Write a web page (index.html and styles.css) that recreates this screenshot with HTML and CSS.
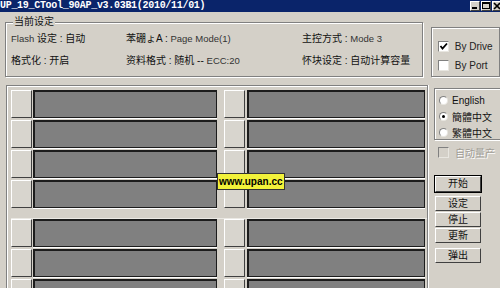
FILE: index.html
```html
<!DOCTYPE html>
<html lang="zh-CN">
<head>
    <meta charset="UTF-8">
    <title>UP_19_CTool_90AP_v3.03B1</title>
    <link rel="stylesheet" href="styles.css">
</head>
<body>
    <div class="titlebar">
        <span class="title">UP_19_CTool_90AP_v3.03B1(2010/11/01)</span>
        <div class="title-btns">
            <div class="tbtn"><svg width="8" height="8" viewBox="0 0 8 8"><rect x="1" y="5" width="5" height="2" fill="#000"/></svg></div>
            <div class="tbtn"><svg width="8" height="8" viewBox="0 0 8 8"><rect x="0.5" y="0.5" width="7" height="6" fill="none" stroke="#000"/><rect x="0" y="0" width="8" height="2" fill="#000"/></svg></div>
            <div class="tbtn"><svg width="8" height="8" viewBox="0 0 8 8"><path d="M1 1 L7 7 M7 1 L1 7" stroke="#000" stroke-width="1.6"/></svg></div>
        </div>
    </div>

    <div class="top">
        <div class="group settings">
            <div class="legend">当前设定</div>
            <div class="settings-grid">
                <span><i>Flash</i> 设定 : 自动</span>
                <span>苯硼ょA : <i>Page Mode(1)</i></span>
                <span>主控方式 : <i>Mode 3</i></span>
                <span>格式化 : 开启</span>
                <span>资料格式 : 随机 -- <i>ECC:20</i></span>
                <span>怀块设定 : 自动计算容量</span>
            </div>
        </div>
        <div class="group mode">
            <div class="check"><span class="box"><svg width="9" height="9" viewBox="0 0 9 9"><path d="M1.5 4 L3.5 6.5 L8 1.5" fill="none" stroke="#000" stroke-width="1.8"/></svg></span>By Drive</div>
            <div class="check"><span class="box"></span>By Port</div>
        </div>
    </div>

    <div class="bottom">
        <div class="slots">
            <div class="slot-group">
                <div class="slot-row"><div class="slot-btn"></div><div class="slot-bar"></div><div class="slot-btn"></div><div class="slot-bar narrow"></div></div>
                <div class="slot-row"><div class="slot-btn"></div><div class="slot-bar"></div><div class="slot-btn"></div><div class="slot-bar narrow"></div></div>
                <div class="slot-row"><div class="slot-btn"></div><div class="slot-bar"></div><div class="slot-btn"></div><div class="slot-bar narrow"></div></div>
                <div class="slot-row"><div class="slot-btn"></div><div class="slot-bar"></div><div class="slot-btn"></div><div class="slot-bar narrow"></div></div>
            </div>
            <div class="slot-group second">
                <div class="slot-row"><div class="slot-btn"></div><div class="slot-bar"></div><div class="slot-btn"></div><div class="slot-bar narrow"></div></div>
                <div class="slot-row"><div class="slot-btn"></div><div class="slot-bar"></div><div class="slot-btn"></div><div class="slot-bar narrow"></div></div>
                <div class="slot-row"><div class="slot-btn"></div><div class="slot-bar"></div><div class="slot-btn"></div><div class="slot-bar narrow"></div></div>
            </div>
            <div class="tooltip">www.upan.cc</div>
        </div>

        <div class="side">
            <div class="group lang">
                <div class="radio"><span class="dot"></span>English</div>
                <div class="radio"><span class="dot on"></span>簡體中文</div>
                <div class="radio"><span class="dot"></span>繁體中文</div>
            </div>
            <div class="check disabled"><span class="box"></span>自动量产</div>
            <div class="buttons">
                <div class="btn default">开始</div>
                <div class="btn">设定</div>
                <div class="btn">停止</div>
                <div class="btn">更新</div>
                <div class="btn eject">弹出</div>
            </div>
        </div>
    </div>
</body>
</html>
```

FILE: styles.css
```css
body {
    width: 500px;
    height: 288px;
    margin: 0;
    overflow: hidden;
    background: #d4d0c8;
    font-family: "Liberation Sans", "Noto Sans CJK SC", sans-serif;
    font-size: 10px;
    color: #111;
}

/* title bar */
.titlebar {
    height: 12px;
    background: #0a246a;
    display: flex;
    justify-content: space-between;
    align-items: center;
}

.title {
    font-family: "Liberation Mono", monospace;
    font-weight: 700;
    font-size: 10px;
    letter-spacing: -0.3px;
    color: #fff;
    line-height: 12px;
}

.title-btns {
    display: flex;
    gap: 1px;
    margin-right: -2px;
}

.tbtn {
    width: 10px;
    height: 10px;
    background: #d4d0c8;
    border-top: 1px solid #fff;
    border-left: 1px solid #fff;
    border-right: 1px solid #404040;
    border-bottom: 1px solid #404040;
    box-sizing: border-box;
    display: flex;
    align-items: center;
    justify-content: center;
}

/* group boxes */
.group {
    position: relative;
    box-sizing: border-box;
    border: 1px solid #808080;
    box-shadow: inset 1px 1px 0 #fff, 1px 1px 0 #fff;
}

.legend {
    position: absolute;
    top: -7px;
    left: 7px;
    padding: 0 1px;
    background: #d4d0c8;
    font-size: 10px;
    line-height: 12px;
}

.top {
    display: flex;
    align-items: flex-end;
    padding-top: 10px;
}

.settings {
    margin-left: 5px;
    width: 423px;
    height: 55px;
}

.settings-grid {
    display: grid;
    grid-template-columns: 115px 176px auto;
    row-gap: 10px;
    padding: 10px 0 0 5px;
    line-height: 12px;
}

.settings-grid i {
    font-style: normal;
    font-size: 9.5px;
    color: #333;
}

.mode {
    margin-left: 8px;
    width: 70px;
    height: 50px;
    padding: 12px 0 0 6px;
}

.check {
    display: flex;
    align-items: center;
    gap: 6px;
    height: 12px;
    margin-bottom: 7px;
    font-size: 10px;
    color: #222;
}

.box {
    width: 9px;
    height: 9px;
    background: #fff;
    border-top: 1px solid #808080;
    border-left: 1px solid #808080;
    border-right: 1px solid #e8e6e0;
    border-bottom: 1px solid #e8e6e0;
    display: flex;
    align-items: center;
    justify-content: center;
}

/* drive slots */
.bottom {
    display: flex;
    margin-top: 8px;
    height: 203px;
    overflow: hidden;
}

.slots {
    position: relative;
    margin-left: 6px;
    width: 424px;
    height: 203px;
    box-sizing: border-box;
    border-top: 1px solid #808080;
    border-left: 1px solid #808080;
    border-right: 1px solid #808080;
    box-shadow: inset 1px 1px 0 #fff, 1px 0 0 #fff;
    padding: 4px 0 0 4px;
}

.slot-row {
    display: flex;
    height: 28px;
    margin-bottom: 2px;
}

.slot-btn {
    width: 21px;
    box-sizing: border-box;
    background: #d8d5ce;
    border-top: 1px solid #fff;
    border-left: 1px solid #fff;
    border-right: 1px solid #404040;
    border-bottom: 1px solid #404040;
}

.slot-btn + .slot-bar {
    margin-left: 1px;
}

.slot-bar {
    width: 184px;
    box-sizing: border-box;
    background: #808080;
    border: 1px solid #1c1c1c;
    border-top-width: 2px;
    border-left-width: 2px;
    box-shadow: 0 1px 0 #fff;
    margin-right: 7px;
}

.slot-bar.narrow {
    width: 178px;
    margin-left: 2px;
    margin-right: 0;
}

.slot-group.second {
    margin-top: 10px;
    border-top: 1px solid #ebe9e4;
}

.tooltip {
    position: absolute;
    left: 210px;
    top: 87px;
    padding: 0 1px;
    height: 15px;
    line-height: 15px;
    background: #f2f23a;
    border: 1px solid #333;
    font-family: "Liberation Sans", sans-serif;
    font-weight: 700;
    font-size: 10px;
    color: #000;
}

/* right side */
.side {
    margin-left: 2px;
    width: 70px;
}

.lang {
    margin: 3px 0 0 4px;
    height: 52px;
    width: 70px;
    padding: 3px 0 0 4px;
}

.radio {
    display: flex;
    align-items: center;
    gap: 4px;
    height: 16px;
    font-size: 10px;
}

.dot {
    width: 9px;
    height: 9px;
    box-sizing: border-box;
    border-radius: 50%;
    background: #fff;
    border: 1px solid #808080;
    border-right-color: #e8e6e0;
    border-bottom-color: #e8e6e0;
    position: relative;
}

.dot.on::after {
    content: "";
    position: absolute;
    left: 2px;
    top: 2px;
    width: 3px;
    height: 3px;
    border-radius: 50%;
    background: #000;
}

.check.disabled {
    margin: 6px 0 0 8px;
    color: #a09d96;
    text-shadow: 1px 1px 0 #fff;
}

.check.disabled .box {
    background: #d4d0c8;
}

.buttons {
    display: flex;
    flex-direction: column;
    gap: 1px;
    margin: 18px 0 0 5px;
}

.btn {
    width: 46px;
    height: 15px;
    box-sizing: border-box;
    text-align: center;
    line-height: 13px;
    font-size: 10px;
    border-top: 1px solid #fff;
    border-left: 1px solid #fff;
    border-right: 1px solid #404040;
    border-bottom: 1px solid #404040;
}

.btn.default {
    height: 16px;
    outline: 1px solid #000;
    margin-bottom: 3px;
}

.btn.eject {
    margin-top: 4px;
}
```
